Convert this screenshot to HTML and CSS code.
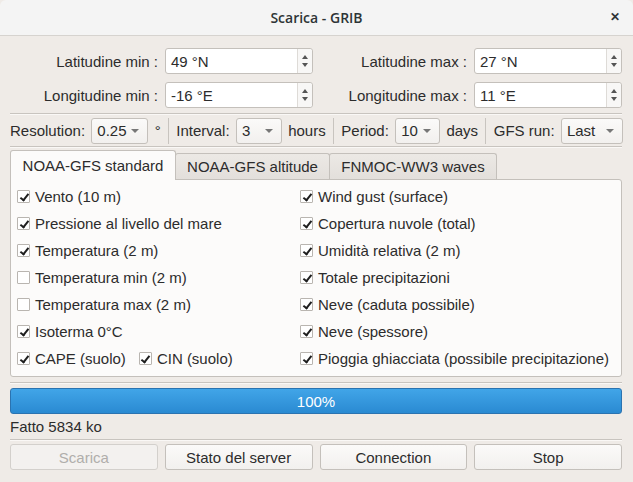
FILE: index.html
```html
<!DOCTYPE html>
<html>
<head>
<meta charset="utf-8">
<link rel="stylesheet" href="styles.css">
</head>
<body>
<div class="window">
  <div class="titlebar">
    <span class="title">Scarica - GRIB</span>
    <span class="close">&#x2715;</span>
  </div>
  <div class="content">
    <div class="coords">
      <span class="lbl">Latitudine min :</span><div class="spin"><span class="val">49 °N</span><span class="arrows"><i class="up"></i><i class="dn"></i></span></div>
      <span class="lbl">Latitudine max :</span><div class="spin"><span class="val">27 °N</span><span class="arrows"><i class="up"></i><i class="dn"></i></span></div>
      <span class="lbl">Longitudine min :</span><div class="spin"><span class="val">-16 °E</span><span class="arrows"><i class="up"></i><i class="dn"></i></span></div>
      <span class="lbl">Longitudine max :</span><div class="spin"><span class="val">11 °E</span><span class="arrows"><i class="up"></i><i class="dn"></i></span></div>
    </div>
    <div class="hsep sep1"></div>
    <div class="opts">
      <span>Resolution:</span>
      <div class="combo w57"><span>0.25</span><i class="caret"></i></div>
      <span>°</span>
      <span class="vsep"></span>
      <span>Interval:</span>
      <div class="combo w46"><span>3</span><i class="caret"></i></div>
      <span>hours</span>
      <span class="vsep"></span>
      <span>Period:</span>
      <div class="combo w45"><span>10</span><i class="caret"></i></div>
      <span>days</span>
      <span class="vsep"></span>
      <span>GFS run:</span>
      <div class="combo w62"><span>Last</span><i class="caret"></i></div>
    </div>
    <div class="hsep"></div>
    <div class="tabs">
      <div class="tab active t1">NOAA-GFS standard</div>
      <div class="tab t2">NOAA-GFS altitude</div>
      <div class="tab t3">FNMOC-WW3 waves</div>
    </div>
    <div class="panel">
      <div class="col">
        <label class="cb"><i class="box on"></i>Vento (10 m)</label>
        <label class="cb"><i class="box on"></i>Pressione al livello del mare</label>
        <label class="cb"><i class="box on"></i>Temperatura (2 m)</label>
        <label class="cb"><i class="box"></i>Temperatura min (2 m)</label>
        <label class="cb"><i class="box"></i>Temperatura max (2 m)</label>
        <label class="cb"><i class="box on"></i>Isoterma 0°C</label>
        <div class="pair"><label class="cb"><i class="box on"></i>CAPE (suolo)</label><label class="cb"><i class="box on"></i>CIN (suolo)</label></div>
      </div>
      <div class="col">
        <label class="cb"><i class="box on"></i>Wind gust (surface)</label>
        <label class="cb"><i class="box on"></i>Copertura nuvole (total)</label>
        <label class="cb"><i class="box on"></i>Umidità relativa (2 m)</label>
        <label class="cb"><i class="box on"></i>Totale precipitazioni</label>
        <label class="cb"><i class="box on"></i>Neve (caduta possibile)</label>
        <label class="cb"><i class="box on"></i>Neve (spessore)</label>
        <label class="cb"><i class="box on"></i>Pioggia ghiacciata (possibile precipitazione)</label>
      </div>
    </div>
    <div class="hsep sep2"></div>
    <div class="progress">100%</div>
    <div class="status">Fatto 5834 ko</div>
    <div class="hsep"></div>
    <div class="buttons">
      <button class="btn disabled">Scarica</button>
      <button class="btn">Stato del server</button>
      <button class="btn">Connection</button>
      <button class="btn">Stop</button>
    </div>
  </div>
</div>
</body>
</html>
```
FILE: styles.css
```css
* { box-sizing: border-box; }
html, body { margin: 0; padding: 0; }
body {
  width: 633px; height: 482px; overflow: hidden;
  font-family: "Liberation Sans", Arial, sans-serif;
  font-size: 15px; color: #2c2c2c;
  background: #efebe7;
}
.window { width: 633px; height: 482px; background: #efebe7; }
.titlebar {
  height: 36px; background: #f4f4f4; border-bottom: 1px solid #d6d3cf;
  display: flex; align-items: center; justify-content: center; position: relative;
  border-radius: 6px 6px 0 0;
}
.title { font-family: "Open Sans", "Noto Sans", sans-serif; font-size: 14px; font-weight: 600; color: #2e3436; }
.close { position: absolute; right: 13px; top: 10px; font-size: 12px; font-weight: bold; color: #2e3436; }
.content { padding: 12px 11px 0 10px; }
.coords {
  display: grid; grid-template-columns: 148px 148px 147px 148px; column-gap: 7px; row-gap: 8px;
  align-items: center;
}
.lbl { text-align: right; white-space: nowrap; }
.spin {
  height: 26px; background: #fff; border: 1px solid #c4c0bb; border-radius: 3px;
  display: flex; align-items: center; justify-content: space-between; padding-left: 5px;
}
.arrows { width: 15px; height: 24px; border-left: 1px solid #dedbd7; display: flex; flex-direction: column; align-items: center; justify-content: center; gap: 4px; background: #f8f7f6; border-radius: 0 3px 3px 0; }
.up, .dn { display: block; width: 0; height: 0; border-left: 3.5px solid transparent; border-right: 3.5px solid transparent; }
.up { border-bottom: 4px solid #555; }
.dn { border-top: 4px solid #555; }
.hsep { background: #c8c4bf; border-bottom: 1px solid #faf8f6; height: 2px; }
.sep1 { margin-top: 5px; }
.opts { display: flex; align-items: center; gap: 6.3px; height: 31px; }
.opts > * { flex: none; white-space: nowrap; }
.vsep { width: 1px; height: 26px; background: #c8c4bf; margin: 0 1px; }
.combo {
  height: 26px; border: 1px solid #c4c0bb; border-radius: 3px; background: linear-gradient(#fbfaf9, #f2f0ee);
  display: flex; align-items: center; justify-content: space-between; padding: 0 8px 0 5px;
}
.w57 { width: 57px; } .w45 { width: 45px; } .w46 { width: 46px; } .w62 { width: 62px; }
.caret { width: 0; height: 0; border-left: 4px solid transparent; border-right: 4px solid transparent; border-top: 4px solid #777; }
.tabs { display: flex; margin-top: 2px; align-items: flex-end; height: 29px; }
.tab {
  height: 26px; border: 1px solid #c4c0bb; border-bottom: none; background: linear-gradient(#ece9e5, #e3dfdb);
  display: flex; align-items: center; justify-content: center; border-radius: 3px 3px 0 0; margin-right: -1px;
}
.tab.active { background: #fcfbfa; position: relative; z-index: 2; margin-bottom: -1px; height: 30px; }
.t1 { width: 166px; }
.t2 { width: 155px; }
.t3 { width: 168px; }
.panel {
  height: 198px; background: #fcfbfa; border: 1px solid #c4c0bb; border-radius: 0 3px 3px 3px;
  display: grid; grid-template-columns: 283px 1fr; padding: 3px 0 0 6px;
}
.col { display: flex; flex-direction: column; }
.cb { display: flex; align-items: center; height: 27px; white-space: nowrap; }
.pair { display: flex; gap: 13px; }
.box { width: 13px; height: 13px; border: 1px solid #b9b5b0; background: #fff; margin-right: 5px; border-radius: 1px; position: relative; display: inline-block; flex: none; }
.box.on::after {
  content: ""; position: absolute; left: 3.5px; top: 1px; width: 3px; height: 7px;
  border-right: 2px solid #1e1e1e; border-bottom: 2px solid #1e1e1e; transform: rotate(38deg);
}
.sep2 { margin-top: 5px; }
.progress {
  margin-top: 4px; height: 26px; border: 1px solid #2b73b0; border-radius: 3px;
  background: linear-gradient(#41a5e8, #2a8ad2); color: #fff; display: flex; align-items: center; justify-content: center;
}
.status { height: 25px; display: flex; align-items: center; }
.buttons { display: flex; gap: 7px; margin-top: 3px; }
.btn {
  width: 148px; height: 26px; font: inherit; color: #2c2c2c; padding: 0;
  border: 1px solid #c4c0bb; border-radius: 3px; background: linear-gradient(#fbfaf9, #f2f0ee);
}
.btn.disabled { color: #b0aeab; background: #f3f1ef; border-color: #d3d0cc; }
```
